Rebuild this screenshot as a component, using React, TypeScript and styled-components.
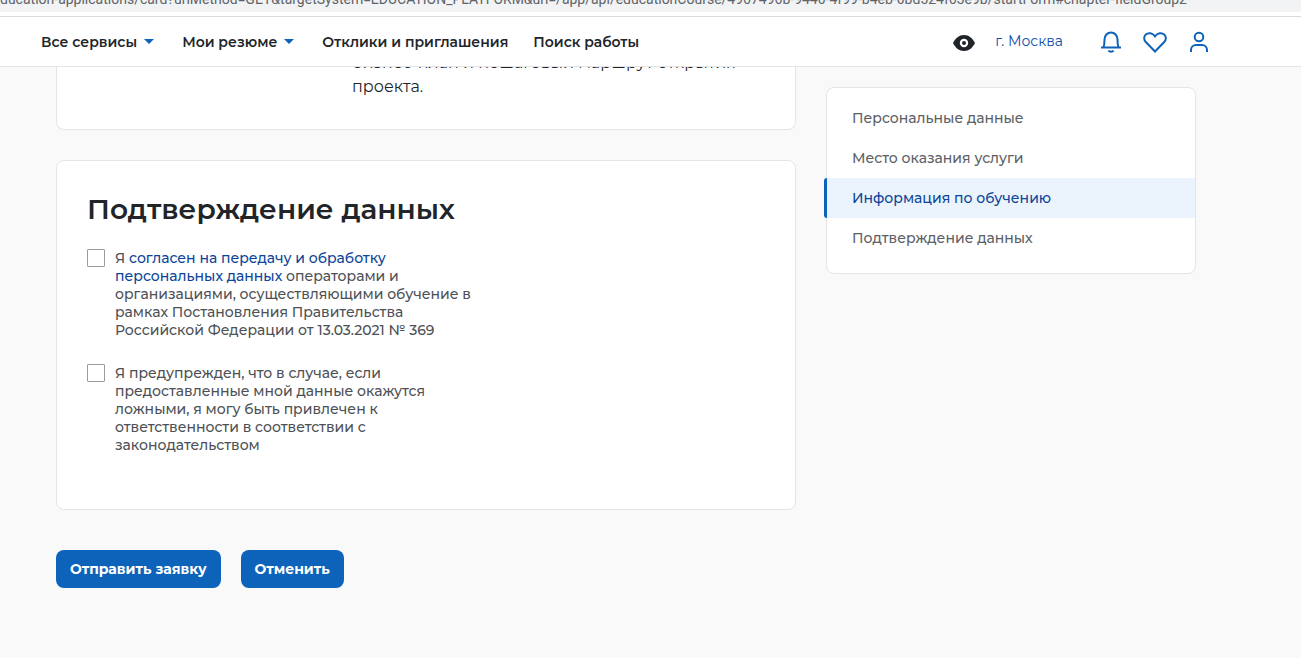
import React from "react";
import styled, { createGlobalStyle } from "styled-components";

const GlobalStyle = createGlobalStyle`
  *, *::before, *::after { box-sizing: border-box; }
  body {
    margin: 0;
    background: #f9f9f9;
    color: #212529;
    font-family: Montserrat, Inter, "Noto Sans", sans-serif;
    font-size: 14px;
    font-weight: 500;
    line-height: 18px;
  }
`;

const AddressBar = styled.div`
  display: flex;
  align-items: flex-end;
  height: 12px;
  overflow: hidden;
  background: #f1f3f4;
  color: #5f6368;
  font: 14px/26px Roboto, "Noto Sans", sans-serif;
  white-space: nowrap;
`;

const Header = styled.header`
  display: flex;
  align-items: center;
  justify-content: space-between;
  height: 51px;
  margin-top: 4px;
  padding: 0 90px 0 41px;
  background: #fff;
  border-top: 1px solid #d9dadc;
  border-bottom: 1px solid #e5e5e5;
`;

const Chrome = styled.div`
  background: #fff;
`;

const Nav = styled.nav`
  display: flex;
  align-items: center;
  gap: 25px;
`;

const NavLink = styled.a`
  display: inline-flex;
  align-items: center;
  gap: 7px;
  color: #212529;
  font-weight: 600;
  text-decoration: none;
  white-space: nowrap;
`;

const Caret = styled.span`
  margin-right: 3px;
  border: 5px solid transparent;
  border-top-color: #0d63ba;
  border-bottom: 0;
`;

const Tools = styled.div`
  display: flex;
  align-items: center;
  gap: 20px;
`;

const IconButton = styled.button`
  display: flex;
  padding: 0;
  border: 0;
  background: none;
  color: #0d63ba;
`;

const CityLink = styled.a`
  margin-right: 16px;
  padding-bottom: 2px;
  color: #0d4cac;
  font-weight: 400;
  text-decoration: none;
`;

const Page = styled.div`
  display: grid;
  grid-template-columns: 2fr 1fr;
  gap: 30px;
  align-items: start;
  padding: 0 105px 70px 56px;
`;

const Main = styled.main`
  min-width: 0;
`;

const Card = styled.section`
  padding: 30px;
  background: #fff;
  border: 1px solid #e5e5e5;
  border-radius: 8px;
`;

const CourseCard = styled(Card)`
  display: flex;
  flex-direction: column;
  justify-content: flex-end;
  height: 63px;
  margin-bottom: 30px;
  padding-left: 295px;
  overflow: hidden;
  border-top: 0;
  border-radius: 0 0 8px 8px;
`;

const Description = styled.p`
  margin: 0;
  font-size: 16px;
  font-weight: 400;
  line-height: 24px;
`;

const ConfirmCard = styled(Card)`
  padding-bottom: 55px;
`;

const Title = styled.h2`
  margin: 0 0 22px;
  font-size: 28px;
  font-weight: 600;
  line-height: 36px;
`;

const Consent = styled.label`
  display: flex;
  gap: 10px;
  align-items: flex-start;
  color: #4d5156;
  & + & { margin-top: 25px; }
`;

const Checkbox = styled.input`
  appearance: none;
  flex: none;
  width: 18px;
  height: 18px;
  margin: 0;
  background: #fff;
  border: 1px solid #9a9aa0;
  border-radius: 1px;
`;

const TextLink = styled.a`
  color: #0b4499;
  text-decoration: none;
`;

const Actions = styled.div`
  display: flex;
  gap: 20px;
  margin-top: 40px;
`;

const Button = styled.button`
  height: 38px;
  padding: 0 14px;
  border: 0;
  border-radius: 8px;
  background: #0d63ba;
  color: #fff;
  font: inherit;
  font-weight: 700;
`;

const Chapters = styled.nav`
  margin-top: 20px;
  padding: 10px 0 15px;
  background: #fff;
  border: 1px solid #e5e5e5;
  border-radius: 8px;
`;

const Chapter = styled.a<{ $active?: boolean }>`
  display: block;
  margin-left: -3px;
  padding: 11px 25px;
  border-left: 3px solid ${(p) => (p.$active ? "#0d63ba" : "transparent")};
  border-radius: 3px 0 0 3px;
  background: ${(p) => (p.$active ? "#ebf4fc" : "transparent")};
  color: ${(p) => (p.$active ? "#0b4499" : "#5c6065")};
  text-decoration: none;
`;

const strokeProps = {
  width: 24,
  height: 24,
  viewBox: "0 0 24 24",
  fill: "none",
  stroke: "currentColor",
  strokeWidth: 2,
};

const EyeIcon = () => (
  <svg width="22" height="18" viewBox="0 0 22 18">
    <path
      fill="#212529"
      fillRule="evenodd"
      d="M11 2C6 2 2.500 5 0 10c2.500 5 6 8 11 8s8.500-3 11-8c-2.500-5-6-8-11-8Zm0 3.800a4.200 4.200 0 1 1 0 8.400 4.200 4.200 0 0 1 0-8.400Zm0 2.200a2 2 0 1 0 0 4 2 2 0 0 0 0-4Z"
    />
  </svg>
);

const BellIcon = () => (
  <svg {...strokeProps}>
    <path d="M2 17.500h20M4.500 17.500C5.500 15 5.500 13 5.500 9.500a6.500 7 0 0 1 13 0c0 3.500 0 5.500 1 8" />
    <path d="M9.500 20.500a2.700 2 0 0 0 5 0" />
  </svg>
);

const HeartIcon = () => (
  <svg {...strokeProps}>
    <path d="M12 21.500 3 12.300C0.500 9.700 0.700 6.400 2.800 4.500 5.300 2.300 9.500 2.800 12 6.300c2.500-3.500 6.700-4 9.200-1.800 2.100 1.900 2.300 5.200-0.200 7.800Z" />
  </svg>
);

const UserIcon = () => (
  <svg {...strokeProps}>
    <circle cx="12" cy="7" r="4.300" />
    <path d="M4 22v-2a5 5 0 0 1 5-5h6a5 5 0 0 1 5 5v2" />
  </svg>
);

const chapters = [
  "Персональные данные",
  "Место оказания услуги",
  "Информация по обучению",
  "Подтверждение данных",
];

export default function App() {
  return (
    <>
      <GlobalStyle />
      <Chrome>
        <AddressBar>
          ducation-applications/card?urlMethod=GET&amp;targetSystem=EDUCATION_PLATFORM&amp;url=/app/api/educationCourse/4967496b-9440-4f99-b4eb-0bd524f63e9b/startForm#chapter-fieldGroup2
        </AddressBar>
        <Header>
          <Nav>
            <NavLink href="#services">Все сервисы <Caret /></NavLink>
            <NavLink href="#resume">Мои резюме <Caret /></NavLink>
            <NavLink href="#responses">Отклики и приглашения</NavLink>
            <NavLink href="#search">Поиск работы</NavLink>
          </Nav>
          <Tools>
            <IconButton aria-label="Версия для слабовидящих"><EyeIcon /></IconButton>
            <CityLink href="#city">г. Москва</CityLink>
            <IconButton aria-label="Уведомления"><BellIcon /></IconButton>
            <IconButton aria-label="Избранное"><HeartIcon /></IconButton>
            <IconButton aria-label="Профиль"><UserIcon /></IconButton>
          </Tools>
        </Header>
      </Chrome>
      <Page>
        <Main>
          <CourseCard>
            <Description>
              бизнес-план и пошаговый маршрут открытия
              <br />
              проекта.
            </Description>
          </CourseCard>
          <ConfirmCard>
            <Title>Подтверждение данных</Title>
            <Consent>
              <Checkbox type="checkbox" />
              <span>
                Я <TextLink href="#agreement">согласен на передачу и обработку<br />
                персональных данных</TextLink> операторами и<br />
                организациями, осуществляющими обучение в<br />
                рамках Постановления Правительства<br />
                Российской Федерации от 13.03.2021 № 369
              </span>
            </Consent>
            <Consent>
              <Checkbox type="checkbox" />
              <span>
                Я предупрежден, что в случае, если<br />
                предоставленные мной данные окажутся<br />
                ложными, я могу быть привлечен к<br />
                ответственности в соответствии с<br />
                законодательством
              </span>
            </Consent>
          </ConfirmCard>
          <Actions>
            <Button type="submit">Отправить заявку</Button>
            <Button type="button">Отменить</Button>
          </Actions>
        </Main>
        <Chapters>
          {chapters.map((name, i) => (
            <Chapter key={name} href={`#chapter-${i}`} $active={i === 2}>{name}</Chapter>
          ))}
        </Chapters>
      </Page>
    </>
  );
}
